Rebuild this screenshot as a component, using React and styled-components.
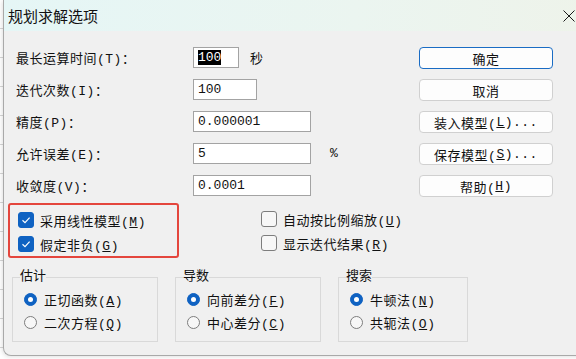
import React from "react";
import styled, { createGlobalStyle } from "styled-components";

const GlobalStyle = createGlobalStyle`
  html, body { margin: 0; padding: 0; }
  body {
    width: 576px;
    height: 359px;
    overflow: hidden;
    background: repeating-linear-gradient(to bottom, #fff 0, #fff 28px, #d6d6d6 28px, #d6d6d6 29px);
    font-family: "Liberation Mono", "Noto Sans CJK SC", monospace;
    color: #111;
  }
`;

const Desktop = styled.div`
  display: flex;
  padding-left: 3px;
  height: 359px;
`;

const Dialog = styled.div`
  flex: 0 0 589px;
  height: 356px;
  box-sizing: border-box;
  background: #f0f0f0;
  border-left: 1px solid #a9a9a9;
  border-bottom: 1px solid #a9a9a9;
  border-bottom-left-radius: 8px;
  box-shadow: -1px 1px 4px rgba(0, 0, 0, 0.12);
  display: flex;
  flex-direction: column;
  overflow: hidden;
`;

const TitleBar = styled.div`
  height: 31px;
  flex-shrink: 0;
  display: flex;
  align-items: center;
  padding-left: 4px;
  background: linear-gradient(90deg, #e5f6f6 0%, #ebf5f0 60%, #eef3ea 100%);
  font-family: "Noto Sans CJK SC", sans-serif;
  font-size: 15px;
  color: #111;
`;

const CloseButton = styled.div`
  margin-left: auto;
  width: 46px;
  height: 31px;
  display: flex;
  align-items: center;
  justify-content: center;
`;

const Body = styled.div`
  padding: 10px 0 0 12px;
`;

const Top = styled.div`
  display: grid;
  grid-template-columns: 403px 134px;
`;

const Form = styled.div`
  display: flex;
  flex-direction: column;
`;

const Row = styled.div`
  display: flex;
  align-items: center;
  height: 32px;
`;

const Label = styled.div`
  width: 177px;
  font-size: 13px;
  letter-spacing: 0.5px;
  white-space: nowrap;
`;

const Field = styled.div`
  width: ${(p) => p.w}px;
  height: 21px;
  box-sizing: border-box;
  border: 1px solid #a3a3a3;
  background: #fff;
  font-family: "Liberation Mono", monospace;
  font-size: 13px;
  padding-left: 4px;
  display: flex;
  align-items: center;
`;

const Selected = styled.span`
  background: #000;
  color: #fff;
`;

const Unit = styled.span`
  margin-left: ${(p) => p.gap}px;
  font-size: 13px;
`;

const Buttons = styled.div`
  padding-top: 6px;
  display: flex;
  flex-direction: column;
  gap: 10px;
`;

const Button = styled.div`
  height: 22px;
  box-sizing: border-box;
  border: 1px solid ${(p) => (p.primary ? "#1a6cc4" : "#d0d0d0")};
  border-radius: 4px;
  background: #fdfdfd;
  display: flex;
  align-items: center;
  justify-content: center;
  font-size: 13px;
  letter-spacing: 0.5px;
  white-space: nowrap;
`;

const CheckSection = styled.div`
  display: flex;
  margin-top: 2px;
`;

const Highlight = styled.div`
  margin-left: -8px;
  width: 171px;
  height: 55px;
  box-sizing: border-box;
  border: 2px solid #e4463d;
  border-radius: 3px;
  padding: 7px 0 0 8px;
  display: flex;
  flex-direction: column;
  gap: 8px;
`;

const CheckColumn = styled.div`
  margin-left: 82px;
  padding-top: 8px;
  display: flex;
  flex-direction: column;
  gap: 8px;
`;

const CheckRow = styled.div`
  display: flex;
  align-items: center;
  gap: 6px;
  height: 16px;
  font-size: 13px;
  letter-spacing: 0.5px;
  white-space: nowrap;
`;

const Box = styled.span`
  width: 16px;
  height: 16px;
  box-sizing: border-box;
  border-radius: 3px;
  flex-shrink: 0;
  display: flex;
  align-items: center;
  justify-content: center;
  background: ${(p) => (p.checked ? "#0f62c2" : "#f7f7f7")};
  border: 1px solid ${(p) => (p.checked ? "#0f62c2" : "#7d7d7d")};
`;

const Groups = styled.div`
  display: flex;
  gap: 17px;
  margin: 11px 0 0 -4px;
`;

const Group = styled.fieldset`
  width: ${(p) => p.w}px;
  height: 73px;
  box-sizing: border-box;
  margin: 0;
  padding: 3px 0 0 11px;
  border: 1px solid #d9d9d9;
  min-width: 0;
  display: flex;
  flex-direction: column;
`;

const Legend = styled.legend`
  padding: 0;
  margin-left: -4px;
  font-size: 13px;
  line-height: 16px;
`;

const RadioRow = styled.div`
  display: flex;
  align-items: center;
  gap: 7px;
  height: 23px;
  font-size: 13px;
  letter-spacing: 0.5px;
  white-space: nowrap;
`;

const Radio = styled.span`
  width: 13px;
  height: 13px;
  box-sizing: border-box;
  border-radius: 50%;
  flex-shrink: 0;
  display: flex;
  align-items: center;
  justify-content: center;
  background: ${(p) => (p.checked ? "#0f62c2" : "#f7f7f7")};
  border: 1px solid ${(p) => (p.checked ? "#0f62c2" : "#7d7d7d")};
  &::after {
    content: "";
    display: ${(p) => (p.checked ? "block" : "none")};
    width: 5px;
    height: 5px;
    border-radius: 50%;
    background: #fff;
  }
`;

const Key = ({ k }) => (
  <>
    (<u>{k}</u>)
  </>
);

const Check = ({ checked, children }) => (
  <CheckRow>
    <Box checked={checked}>
      {checked && (
        <svg width="12" height="12" viewBox="0 0 12 12">
          <path d="M2.5 6.3 L5 8.6 L9.6 3.6" fill="none" stroke="#fff" strokeWidth="1.2" />
        </svg>
      )}
    </Box>
    <span>{children}</span>
  </CheckRow>
);

const Option = ({ checked, children }) => (
  <RadioRow>
    <Radio checked={checked} />
    <span>{children}</span>
  </RadioRow>
);

const rows = [
  { label: "最长运算时间(T)：", w: 46, value: <Selected>100</Selected>, unit: "秒", gap: 11 },
  { label: "迭代次数(I)：", w: 64, value: "100" },
  { label: "精度(P)：", w: 118, value: "0.000001" },
  { label: "允许误差(E)：", w: 118, value: "5", unit: "%", gap: 19 },
  { label: "收敛度(V)：", w: 118, value: "0.0001" },
];

export default function App() {
  return (
    <>
      <GlobalStyle />
      <Desktop>
        <Dialog>
          <TitleBar>
            规划求解选项
            <CloseButton>
              <svg width="12" height="12" viewBox="0 0 12 12">
                <path d="M0.5 0.5 L11.5 11.5 M11.5 0.5 L0.5 11.5" stroke="#1a1a1a" strokeWidth="1" />
              </svg>
            </CloseButton>
          </TitleBar>
          <Body>
            <Top>
              <Form>
                {rows.map((r) => (
                  <Row key={r.label}>
                    <Label>{r.label}</Label>
                    <Field w={r.w}>{r.value}</Field>
                    {r.unit && <Unit gap={r.gap}>{r.unit}</Unit>}
                  </Row>
                ))}
              </Form>
              <Buttons>
                <Button primary>确定</Button>
                <Button>取消</Button>
                <Button>装入模型<Key k="L" />...</Button>
                <Button>保存模型<Key k="S" />...</Button>
                <Button>帮助<Key k="H" /></Button>
              </Buttons>
            </Top>
            <CheckSection>
              <Highlight>
                <Check checked>采用线性模型<Key k="M" /></Check>
                <Check checked>假定非负<Key k="G" /></Check>
              </Highlight>
              <CheckColumn>
                <Check>自动按比例缩放<Key k="U" /></Check>
                <Check>显示迭代结果<Key k="R" /></Check>
              </CheckColumn>
            </CheckSection>
            <Groups>
              <Group w={146}>
                <Legend>估计</Legend>
                <Option checked>正切函数<Key k="A" /></Option>
                <Option>二次方程<Key k="Q" /></Option>
              </Group>
              <Group w={146}>
                <Legend>导数</Legend>
                <Option checked>向前差分<Key k="F" /></Option>
                <Option>中心差分<Key k="C" /></Option>
              </Group>
              <Group w={130}>
                <Legend>搜索</Legend>
                <Option checked>牛顿法<Key k="N" /></Option>
                <Option>共轭法<Key k="O" /></Option>
              </Group>
            </Groups>
          </Body>
        </Dialog>
      </Desktop>
    </>
  );
}
